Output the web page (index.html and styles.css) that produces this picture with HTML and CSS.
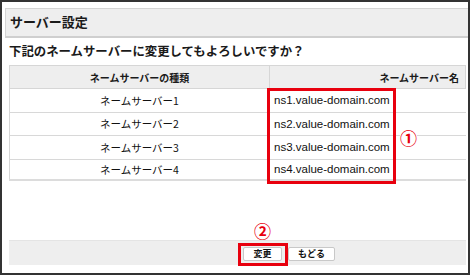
FILE: index.html
```html
<!DOCTYPE html>
<html lang="ja">
<head>
<meta charset="utf-8">
<link rel="stylesheet" href="styles.css">
</head>
<body>
<div class="frame">
  <div class="title">サーバー設定</div>
  <div class="content">
    <p class="question">下記のネームサーバーに変更してもよろしいですか？</p>
    <div class="table-wrap">
      <table class="ns-table">
        <thead>
          <tr><th class="col-kind">ネームサーバーの種類</th><th class="col-name">ネームサーバー名</th></tr>
        </thead>
        <tbody>
          <tr><td class="kind">ネームサーバー1</td><td class="name">ns1.value-domain.com</td></tr>
          <tr><td class="kind">ネームサーバー2</td><td class="name">ns2.value-domain.com</td></tr>
          <tr><td class="kind">ネームサーバー3</td><td class="name">ns3.value-domain.com</td></tr>
          <tr><td class="kind">ネームサーバー4</td><td class="name">ns4.value-domain.com</td></tr>
        </tbody>
      </table>
      <div class="mark-box box-names"></div>
      <span class="mark-num num1">①</span>
    </div>
    <div class="footer">
      <button class="btn">変更</button>
      <button class="btn">もどる</button>
      <div class="mark-box box-btn"></div>
      <span class="mark-num num2">②</span>
    </div>
  </div>
</div>
</body>
</html>
```
FILE: styles.css
```css
* { box-sizing: border-box; }
html, body { margin: 0; padding: 0; background: #fff; }
body {
  font-family: "Noto Sans CJK JP", "Liberation Sans", sans-serif;
  color: #1a1a1a;
}
.frame {
  width: 470px;
  height: 275px;
  border: 2px solid #333;
  overflow: hidden;
}
.title {
  margin: 6px 0 0 3px;
  height: 30px;
  background: #eeeeee;
  border-top: 1px solid #d4d4d4;
  border-left: 1px solid #d4d4d4;
  border-bottom: 2px solid #cfcfcf;
  font-size: 13px;
  font-weight: bold;
  line-height: 26px;
  padding-left: 4px;
}
.content {
  padding: 0 2px 0 7px;
}
.question {
  margin: 3px 0 0 0;
  font-size: 12.4px;
  font-weight: bold;
  line-height: 20px;
}
.table-wrap {
  position: relative;
  margin-top: 4px;
}
.ns-table {
  width: 457px;
  border-collapse: collapse;
  table-layout: fixed;
  border-bottom: 2px solid #dcdcdc;
}
.ns-table th {
  background: #eeeeee;
  border: 1px solid #d6d6d6;
  height: 23px;
  font-size: 10px;
  font-weight: bold;
  padding: 0;
}
.col-kind { width: 260px; text-align: center; }
.col-name { text-align: right; padding-right: 6px !important; }
.ns-table td {
  height: 23.5px;
  border-bottom: 1px solid #d8d8d8;
  padding: 0;
  font-size: 10.5px;
  color: #111;
}
.ns-table tr:last-child td { height: 21px; }
.kind { text-align: center; border-left: 1px solid #d6d6d6; }
.name {
  font-family: "Liberation Sans", Arial, sans-serif;
  font-size: 11.5px !important;
  padding-left: 4px !important;
  border-left: 1px solid #d6d6d6;
}
.mark-box {
  position: absolute;
  border: 3px solid #e8000e;
}
.box-names {
  left: 258px;
  top: 23px;
  width: 129px;
  height: 96px;
}
.mark-num {
  position: absolute;
  color: #e8000e;
  font-size: 17px;
  font-weight: bold;
  line-height: 17px;
  background: #fff;
}
.num1 { left: 391px; top: 64px; }
.footer {
  position: relative;
  margin-top: 59px;
  height: 25px;
  background: #eeeeee;
  border-top: 1px solid #e4e4e4;
  display: flex;
  align-items: flex-start;
  gap: 6px;
  padding: 6px 0 0 234px;
}
.btn {
  font-family: "Noto Sans CJK JP", sans-serif;
  font-size: 9px;
  font-weight: bold;
  height: 14px;
  line-height: 12px;
  padding: 0;
  background: #fff;
  border: 1px solid #c8c8c8;
  border-radius: 2px;
  color: #111;
  width: 39px;
}
.btn + .btn { width: 47px; }
.box-btn {
  left: 229px;
  top: 2px;
  width: 50px;
  height: 23px;
}
.num2 { left: 245px; top: -19px; background: transparent; }
```
